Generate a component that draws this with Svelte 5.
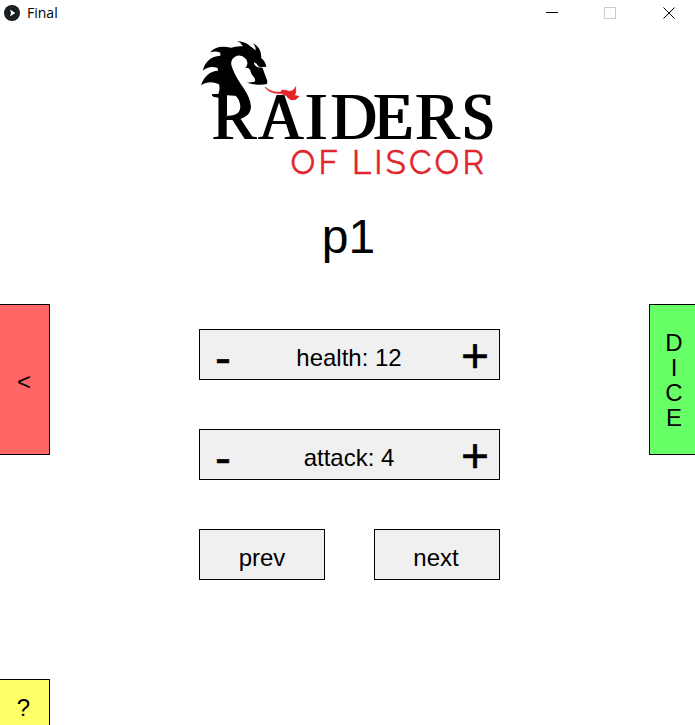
<script>
  let player = $state(1);
  let stats = $state([
    { name: 'health', value: 12 },
    { name: 'attack', value: 4 }
  ]);

  const dice = ['D', 'I', 'C', 'E'];
  const letters = [
    { c: 'R', x: 212, w: 0.98 },
    { c: 'A', x: 258.6, w: 0.92 },
    { c: 'I', x: 305.3, w: 0.98 },
    { c: 'D', x: 331, w: 0.94 },
    { c: 'E', x: 373.4, w: 0.97 },
    { c: 'R', x: 415.4, w: 0.98 },
    { c: 'S', x: 462, w: 0.88 }
  ];
</script>

<div class="window">
  <header class="titlebar">
    <svg class="appicon" width="16" height="16" viewBox="0 0 16 16">
      <circle cx="8" cy="8" r="8" fill="#15191c" />
      <circle cx="8" cy="8" r="5.8" fill="none" stroke="#30363a" stroke-width=".7" />
      <path d="M6 4.6L11.3 8L6 11.4L7 8Z" fill="#fff" />
    </svg>
    <span class="title">Final</span>
    <svg class="controls" width="130" height="12" viewBox="0 0 130 12">
      <path d="M0 5.5H12" stroke="#000" fill="none" />
      <rect x="58.5" y=".5" width="11" height="11" stroke="#ccc" fill="none" />
      <path d="M117.5 .5L128.5 11.5M128.5 .5L117.5 11.5" stroke="#000" fill="none" />
    </svg>
  </header>

  <main class="stage">
    <div class="side left">
      <button class="back">&lt;</button>
      <button class="help">?</button>
    </div>

    <div class="center">
      <svg class="logo" width="301" height="147" viewBox="199 35 301 147">
        <filter id="widen" x="-5%" y="-5%" width="110%" height="110%">
          <feMorphology operator="dilate" radius="1 0" />
        </filter>
        <g font-family="Liberation Serif, serif" font-size="67.5" filter="url(#widen)">
          {#each letters as l}
            <text transform="translate({l.x} 139.3) scale({l.w} 1)">{l.c}</text>
          {/each}
        </g>
        <g transform="translate(190 30) scale(.33333)">
          <path d="M111 196H137L151 214V245L140 255H111Z" fill="#fff" />
          <path d="M66 192H85Q91 178 87 163Q58 149 33 165Q48 124 84 122L83 114Q59 105 38 122Q49 80 91 77L91 68Q77 61 60 67Q80 43 123 53Q140 47 159 49Q155 39 142 33Q169 36 180 48L197 61Q198 49 189 40Q213 52 214 80L213 83Q227 95 229 110L211 112Q203 109 200 101L192 97Q191 107 204 112L218 114L222 126L232 153L231 162Q206 168 171 158L192 156Q199 151 193 143Q183 134 180 119Q176 112 165 114Q178 103 168 87Q151 70 134 81Q116 94 129 119Q139 144 160 173Q182 205 183 230Q182 252 164 260L135 263H111V257Q151 259 151 228Q148 206 137 197L111 195V258L87 250V197H66Z" />
          <path d="M225 171Q248 190 273 186Q272 178 286 181Q309 190 317 170Q320 187 313 196L327 199Q318 213 303 209Q293 205 289 197Q278 190 261 190Q237 189 225 171Z" fill="#e2242b" stroke="#e2242b" stroke-width="2" />
        </g>
        <text x="290.5" y="173.5" font-family="Raleway, Lato, sans-serif" font-size="33" textLength="193.5" lengthAdjust="spacing" fill="#e2242b" stroke="#e2242b" stroke-width=".4">OF LISCOR</text>
      </svg>

      <h1>p{player}</h1>

      {#each stats as s}
        <div class="box stat">
          <button class="step minus" onclick={() => s.value--}>-</button>
          <span>{s.name}: {s.value}</span>
          <button class="step plus" onclick={() => s.value++}>+</button>
        </div>
      {/each}

      <div class="nav">
        <button class="box" onclick={() => player--}>prev</button>
        <button class="box next" onclick={() => player++}>next</button>
      </div>
    </div>

    <div class="side right">
      <button class="dice">
        {#each dice as d}<span>{d}</span>{/each}
      </button>
    </div>
  </main>
</div>

<style>
  .window {
    width: 695px;
    height: 725px;
    overflow: hidden;
    display: flex;
    flex-direction: column;
    background: #fff;
    color: #000;
    font-family: "Liberation Sans", Arial, sans-serif;
    font-size: 24px;
  }
  .titlebar {
    height: 27px;
    flex: none;
    display: flex;
    align-items: center;
    padding: 0 19px 1px 4px;
    box-sizing: border-box;
  }
  .title {
    font: 14px/20px "Open Sans", "Noto Sans", sans-serif;
    letter-spacing: 0;
    margin-left: 7px;
    flex: 1;
  }
  .stage {
    flex: 1;
    min-height: 0;
    display: grid;
    grid-template-columns: 50px 1fr 46px;
  }
  button {
    font: inherit;
    color: inherit;
    margin: 0;
    padding: 0;
    border: 0;
    border-radius: 0;
    background: none;
    box-sizing: border-box;
  }
  .side {
    display: flex;
    flex-direction: column;
    padding-top: 277px;
    min-height: 0;
  }
  .back {
    height: 151px;
    flex: none;
    padding: 4px 1px 0 0;
    background: #ff6666;
    border: 1px solid #000;
    border-left: 0;
  }
  .help {
    height: 51px;
    flex: none;
    margin-top: 224px;
    padding: 7px 2px 0 0;
    background: #ffff66;
    border: 1px solid #000;
    border-left: 0;
  }
  .dice {
    height: 151px;
    flex: none;
    display: flex;
    flex-direction: column;
    align-items: center;
    justify-content: center;
    line-height: 25px;
    padding: 1px 0 0 3px;
    background: #66ff66;
    border: 1px solid #000;
    border-right: 0;
  }
  .center {
    display: flex;
    flex-direction: column;
    width: 301px;
    margin-left: 149px;
  }
  .logo {
    margin-top: 8px;
    flex: none;
  }
  h1 {
    margin: 27px 0 65px;
    padding-right: 2px;
    font-size: 48px;
    font-weight: 400;
    line-height: 55px;
    text-align: center;
  }
  .box {
    height: 51px;
    border: 1px solid #000;
    background: #f0f0f0;
    box-sizing: border-box;
    line-height: 49px;
    padding-top: 3px;
  }
  .stat {
    display: flex;
    justify-content: space-between;
    margin-bottom: 49px;
    padding: 0 10px 0 15px;
  }
  .stat span {
    padding: 3px 0 0 6px;
  }
  .step {
    font-size: 48px;
    line-height: 49px;
    width: 16px;
    height: 49px;
    padding-top: 1px;
    -webkit-text-stroke: 0.5px #000;
  }
  .step.minus {
    height: 51px;
    padding-top: 4px;
    line-height: 47px;
  }
  .step.plus {
    width: 28px;
  }
  .nav {
    display: flex;
    justify-content: space-between;
  }
  .nav .box {
    width: 126px;
  }
  .nav .next {
    padding-right: 2px;
  }
</style>
